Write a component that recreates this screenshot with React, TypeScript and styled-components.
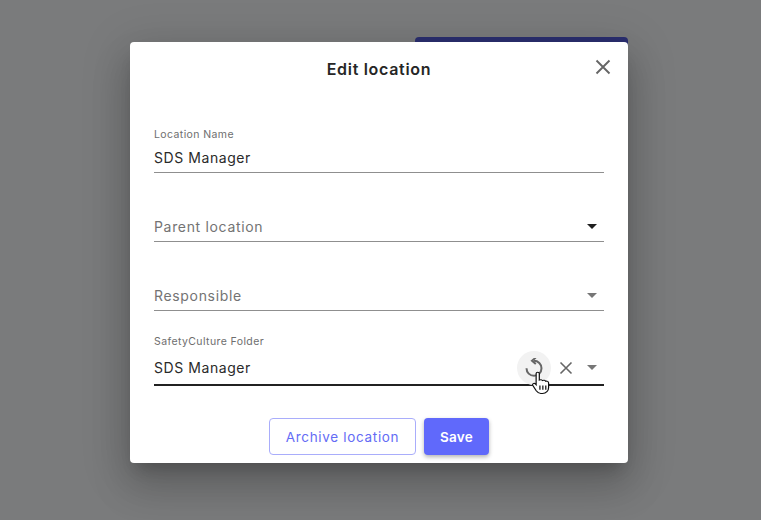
import React from "react";
import styled, { createGlobalStyle } from "styled-components";

const GlobalStyle = createGlobalStyle`
  html, body {
    margin: 0;
    height: 100%;
    overflow: hidden;
  }
  body {
    font-family: Inter, "Open Sans", sans-serif;
    color: #212121;
  }
`;

const Backdrop = styled.div`
  position: relative;
  width: 761px;
  height: 520px;
  background: #7a7b7c;
  padding: 42px 0 0 130px;
  box-sizing: border-box;
  overflow: hidden;
`;

const BehindButton = styled.div`
  position: absolute;
  left: 415px;
  top: 37px;
  width: 213px;
  height: 30px;
  border-radius: 4px;
  background: #2b2f70;
`;

const Dialog = styled.div`
  position: relative;
  width: 498px;
  height: 421px;
  background: #fff;
  border-radius: 4px;
  box-sizing: border-box;
  padding: 17px 24px 0;
  box-shadow: 0 11px 15px -7px rgba(0, 0, 0, 0.2), 0 24px 38px 3px rgba(0, 0, 0, 0.14), 0 9px 46px 8px rgba(0, 0, 0, 0.12);
  display: flex;
  flex-direction: column;
`;

const Title = styled.h2`
  margin: 0 0 48px;
  font-size: 16px;
  line-height: 21px;
  font-weight: 600;
  letter-spacing: 0.7px;
  text-align: center;
  color: #262626;
`;

const CloseButton = styled.button`
  position: absolute;
  top: 15px;
  right: 15px;
  width: 20px;
  height: 20px;
  padding: 0;
  border: 0;
  background: none;
  color: #666;
  display: flex;
`;

const Fields = styled.div`
  display: flex;
  flex-direction: column;
`;

const Field = styled.div<{ $gap?: number }>`
  margin-bottom: ${(p) => p.$gap ?? 0}px;
`;

const SmallLabel = styled.div`
  font-size: 10.5px;
  line-height: 14px;
  letter-spacing: 0.4px;
  color: #6e6e6e;
`;

const Row = styled.div<{ $active?: boolean }>`
  height: ${(p) => (p.$active ? 37 : 31)}px;
  padding-top: ${(p) => (p.$active ? 2 : 0)}px;
  display: flex;
  align-items: center;
  box-sizing: border-box;
  border-bottom: ${(p) => (p.$active ? "2px solid #212121" : "1px solid #8f8f8f")};
`;

const Value = styled.span`
  flex: 1;
  font-size: 14px;
  letter-spacing: 0.57px;
  color: #2a2a2a;
`;

const Placeholder = styled(Value)`
  color: #737373;
  letter-spacing: 0.67px;
`;

const Caret = styled.span<{ $dark?: boolean }>`
  width: 0;
  height: 0;
  margin-right: 7px;
  border-left: 5px solid transparent;
  border-right: 5px solid transparent;
  border-top: 5px solid ${(p) => (p.$dark ? "#1f1f1f" : "#767676")};
`;

const RefreshCircle = styled.span`
  position: relative;
  width: 34px;
  height: 34px;
  margin-right: 7px;
  border-radius: 50%;
  background: #f2f2f2;
  color: #666;
  display: flex;
  align-items: center;
  justify-content: center;
`;

const Cursor = styled.svg`
  position: absolute;
  left: 14px;
  top: 20px;
`;

const ClearIcon = styled.svg`
  margin-right: 13px;
  color: #666;
`;

const Actions = styled.div`
  display: flex;
  justify-content: center;
  gap: 8px;
  margin-top: 32px;
`;

const OutlineButton = styled.button`
  width: 147px;
  height: 37px;
  border: 1px solid #a9adfb;
  border-radius: 4px;
  background: #fff;
  color: #646cf5;
  font: 400 13.5px Inter, sans-serif;
  letter-spacing: 0.68px;
`;

const SaveButton = styled.button`
  width: 65px;
  height: 37px;
  border: 0;
  border-radius: 4px;
  background: #6069fb;
  color: #fff;
  font: 600 13.5px Inter, sans-serif;
  letter-spacing: 0.3px;
  box-shadow: 0 2px 4px rgba(0, 0, 0, 0.3);
`;

const App: React.FC = () => {
  return (
    <Backdrop>
      <GlobalStyle />
      <BehindButton />
      <Dialog>
        <Title>Edit location</Title>
        <CloseButton aria-label="Close">
          <svg width="20" height="20" viewBox="0 0 20 20" fill="none" stroke="currentColor" strokeWidth="1.9">
            <path d="M3.5 3.5 16.5 16.5M16.5 3.5 3.5 16.5" />
          </svg>
        </CloseButton>
        <Fields>
          <Field $gap={38}>
            <SmallLabel>Location Name</SmallLabel>
            <Row>
              <Value>SDS Manager</Value>
            </Row>
          </Field>
          <Field $gap={38}>
            <Row>
              <Placeholder>Parent location</Placeholder>
              <Caret $dark />
            </Row>
          </Field>
          <Field $gap={24}>
            <Row>
              <Placeholder>Responsible</Placeholder>
              <Caret />
            </Row>
          </Field>
          <Field>
            <SmallLabel>SafetyCulture Folder</SmallLabel>
            <Row $active>
              <Value>SDS Manager</Value>
              <RefreshCircle>
                <svg width="20" height="20" viewBox="0 0 20 20" fill="none" stroke="currentColor" strokeWidth="2">
                  <path d="M10 2.8a7.5 7.5 0 1 1-7.5 7.5" />
                  <path d="M11.8 -.4 8 2.8l3.8 3.2" />
                </svg>
                <Cursor width="22" height="25" viewBox="0 0 18 24" preserveAspectRatio="none">
                  <path
                    d="M4.2 2.3c0-1.6 2.6-1.6 2.6 0v6.4c.8-.6 2.2-.5 2.6.5.8-.5 2.2-.3 2.6.7.9-.4 2.4 0 2.4 1.5v4.4c0 3.2-2 5.7-5 5.7H8c-1.8 0-2.8-1-3.7-2.5L1.5 14c-.9-1.5 1-2.9 2.1-1.6l.6.8V2.3Z"
                    fill="#fff"
                    stroke="#111"
                    strokeWidth="1"
                  />
                  <path d="M7.3 14v4M9.7 14v4M12.1 14v4" stroke="#111" strokeWidth="1" />
                </Cursor>
              </RefreshCircle>
              <ClearIcon width="16" height="16" viewBox="0 0 16 16" fill="none" stroke="currentColor" strokeWidth="1.6">
                <path d="M2.5 2.5 13.5 13.5M13.5 2.5 2.5 13.5" />
              </ClearIcon>
              <Caret />
            </Row>
          </Field>
        </Fields>
        <Actions>
          <OutlineButton>Archive location</OutlineButton>
          <SaveButton>Save</SaveButton>
        </Actions>
      </Dialog>
    </Backdrop>
  );
};

export default App;
